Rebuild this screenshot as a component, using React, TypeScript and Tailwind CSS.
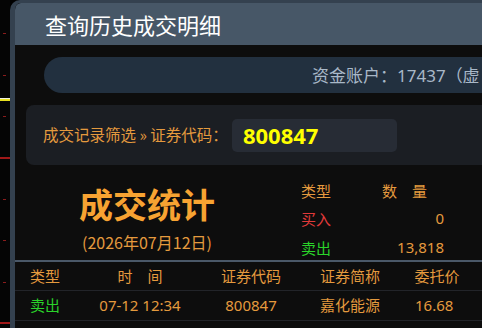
const cjk = { fontFamily: '"Noto Sans CJK SC", "Noto Sans", sans-serif' }
const num = { fontFamily: '"Noto Sans", "Noto Sans CJK SC", sans-serif' }

function ChartStrip() {
  const dots = [33, 75, 116, 199, 240, 282]
  return (
    <div className="relative w-[10px] shrink-0 bg-[#050505]">
      {dots.map((y) => (
        <div key={y} className="absolute left-[3px] h-[1px] w-[3px] bg-[#8a1c1c]" style={{ top: y }} />
      ))}
      <div className="absolute left-0 top-[157px] h-[2px] w-[10px] bg-[#a01818]" />
      <div className="absolute left-0 top-[322px] h-[2px] w-[10px] bg-[#a01818]" />
      <div className="absolute left-0 top-[98px] h-[1px] w-[10px] bg-[#f0f0e0]" />
      <div className="absolute left-0 top-[99px] h-[2px] w-[10px] bg-[#e8e020]" />
    </div>
  )
}

export default function App() {
  return (
    <div className="flex h-[328px] w-[482px] overflow-hidden bg-black" style={cjk}>
      <ChartStrip />
      <div className="flex min-w-0 flex-1 flex-col overflow-hidden rounded-tl-[10px] border-l-[5px] border-t-[3px] border-[#34414f] bg-[#0d0d0d]">
        {/* header */}
        <div className="flex h-[42px] shrink-0 items-center rounded-tl-[6px] bg-[#475767] pl-[30px]">
          <span className="whitespace-nowrap text-[22px] leading-none text-white">查询历史成交明细</span>
        </div>

        {/* account */}
        <div className="ml-[29px] mt-[12px] flex h-[36px] w-[600px] shrink-0 items-center rounded-l-full bg-[#22303f] pl-[268px]">
          <span className="whitespace-nowrap text-[17px] text-[#a9b8c8]">
            资金账户：<span style={num}>17437</span>（虚
          </span>
        </div>

        {/* filter */}
        <div className="ml-[11px] mt-[12px] flex h-[60px] w-[600px] shrink-0 items-center rounded-[8px] bg-[#1b1e23] pl-[17px]">
          <span className="whitespace-nowrap text-[15.5px] text-[#e49a3e]">成交记录筛选 » 证券代码：</span>
          <div className="ml-[4px] flex h-[33px] w-[165px] items-center rounded-[5px] bg-[#272c35] pl-[11px]">
            <span className="text-[22px] font-bold leading-none text-[#ffff00]" style={num}>800847</span>
          </div>
        </div>

        {/* stats */}
        <div className="flex h-[95px] shrink-0">
          <div className="flex w-[264px] flex-col items-center pt-[22px]">
            <span className="whitespace-nowrap text-[34px] font-bold leading-none text-[#f7a332]">成交统计</span>
            <span className="mt-[13px] whitespace-nowrap text-[16px] leading-none text-[#e49a3e]">(2026年07月12日)</span>
          </div>
          <div className="ml-[22px] w-[143px] pt-[11px] text-[15px] leading-none">
            <div className="flex h-[28px] items-center text-[#e49a3e]">
              <span className="w-[81px]">类型</span>
              <span>数　量</span>
            </div>
            <div className="flex h-[29px] items-center justify-between">
              <span className="text-[#e03a3a]">买入</span>
              <span className="text-[#e49a3e]" style={num}>0</span>
            </div>
            <div className="flex h-[29px] items-center justify-between">
              <span className="text-[#2ad42a]">卖出</span>
              <span className="text-[#e49a3e]" style={num}>13,818</span>
            </div>
          </div>
        </div>

        {/* table */}
        <div className="h-[2px] shrink-0 bg-[#4a5868]" />
        <div className="grid h-[29px] shrink-0 grid-cols-[60px_130px_92px_106px_68px] items-center border-b border-[#222429] text-[15px] text-[#e49a3e]">
          <span className="text-center">类型</span>
          <span className="text-center">时　间</span>
          <span className="text-center">证券代码</span>
          <span className="text-center">证券简称</span>
          <span className="text-center">委托价</span>
        </div>
        <div className="grid h-[30px] shrink-0 grid-cols-[60px_130px_92px_106px_68px] items-center border-b border-[#222429] text-[15px] text-[#e49a3e]">
          <span className="text-center text-[#2ad42a]">卖出</span>
          <span className="text-center" style={num}>07-12 12:34</span>
          <span className="text-center" style={num}>800847</span>
          <span className="text-center">嘉化能源</span>
          <span className="pl-[12px]" style={num}>16.68</span>
        </div>
      </div>
    </div>
  )
}
